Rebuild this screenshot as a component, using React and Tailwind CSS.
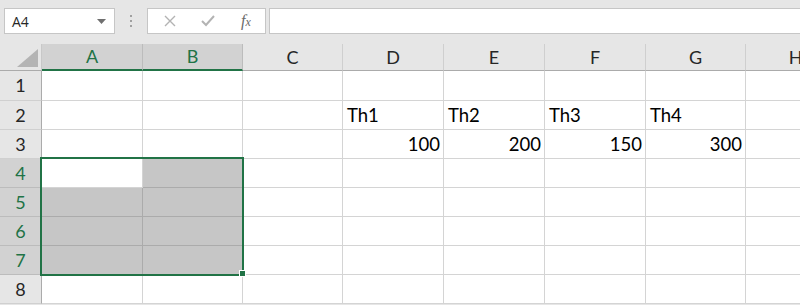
import React from "react";

const cols = [
  { name: "A", w: 101 },
  { name: "B", w: 100 },
  { name: "C", w: 100 },
  { name: "D", w: 101 },
  { name: "E", w: 101 },
  { name: "F", w: 101 },
  { name: "G", w: 100 },
  { name: "H", w: 100 },
];

const data = {
  2: { D: "Th1", E: "Th2", F: "Th3", G: "Th4" },
  3: { D: "100", E: "200", F: "150", G: "300" },
};

const selCols = ["A", "B"];
const selRows = [4, 5, 6, 7];

function isFilled(row, col) {
  if (!selRows.includes(row) || !selCols.includes(col)) return false;
  return !(row === 4 && col === "A");
}

function Toolbar() {
  return (
    <div className="h-[44px] flex items-start pt-[8px] pl-[4px] gap-0">
      <div className="w-[111px] h-[26px] bg-white border border-[#c6c6c6] flex items-center justify-between pl-[7px] pr-[8px] text-[14px] text-[#262626] font-['Open_Sans',sans-serif]">
        <span>A4</span>
        <svg width="9" height="5" viewBox="0 0 9 5">
          <polygon points="0,0 9,0 4.5,5" fill="#6f6f6f" />
        </svg>
      </div>
      <div className="w-[32px] h-[26px] flex flex-col items-center justify-center gap-[3px]">
        <span className="w-[2px] h-[2px] bg-[#a0a0a0]" />
        <span className="w-[2px] h-[2px] bg-[#a0a0a0]" />
        <span className="w-[2px] h-[2px] bg-[#a0a0a0]" />
      </div>
      <div className="w-[119px] h-[26px] bg-white border border-[#c6c6c6] flex items-center">
        <div className="w-[41px] flex justify-center pl-[2px]">
          <svg width="12" height="12" viewBox="0 0 12 12">
            <path d="M1 1 L11 11 M11 1 L1 11" stroke="#b3b3b3" strokeWidth="1.4" fill="none" />
          </svg>
        </div>
        <div className="w-[38px] flex justify-center">
          <svg width="14" height="12" viewBox="0 0 14 12">
            <path d="M1 6 L5 10 L13 1" stroke="#b3b3b3" strokeWidth="2" fill="none" />
          </svg>
        </div>
        <div className="w-[38px] flex justify-center text-[#6a6a6a] italic text-[16px] leading-none font-['Liberation_Serif',serif]">
          <span>f<span className="text-[12px]">x</span></span>
        </div>
      </div>
      <div className="flex-1 ml-[3px] h-[26px] bg-white border border-[#c6c6c6] border-r-0" />
    </div>
  );
}

function HeaderRow() {
  return (
    <div className="flex h-[27px]">
      <div className="w-[42px] shrink-0 border-r border-[#c8c8c8] border-b border-b-[#ababab] bg-[#e6e6e6] relative">
        <svg className="absolute left-[17px] top-[5px]" width="22" height="18" viewBox="0 0 22 18">
          <polygon points="21,0 21,18 0,18" fill="#b4b4b4" />
        </svg>
      </div>
      {cols.map((c) => {
        const sel = selCols.includes(c.name);
        return (
          <div
            key={c.name}
            style={{ width: c.w }}
            className={
              "shrink-0 flex items-center justify-center text-[18px] border-r " +
              (sel
                ? "bg-[#d2d2d2] text-[#217346] border-[#bcbcbc] border-b-2 border-b-[#217346]"
                : "bg-[#e6e6e6] text-[#262626] border-[#cfcfcf] border-b border-b-[#ababab]")
            }
          >
            {c.name}
          </div>
        );
      })}
    </div>
  );
}

function Row({ n }) {
  const selRow = selRows.includes(n);
  return (
    <div className={"flex " + (n === 1 ? "h-[30px]" : "h-[29px]")}>
      <div
        className={
          "w-[42px] shrink-0 flex items-center justify-center text-[18px] border-r border-b " +
          (selRow
            ? "bg-[#d2d2d2] text-[#217346] border-r-[#ababab] border-b-[#bcbcbc]"
            : "bg-[#e6e6e6] text-[#262626] border-r-[#ababab] border-b-[#d0d0d0]")
        }
      >
        {n}
      </div>
      {cols.map((c) => {
        const v = data[n] && data[n][c.name];
        const filled = isFilled(n, c.name);
        const num = v && /^\d+$/.test(v);
        return (
          <div
            key={c.name}
            style={{ width: c.w }}
            className={
              "shrink-0 flex items-end pb-[2px] pl-[4px] pr-[3px] text-[18.5px] leading-[24px] text-black border-r border-b " +
              (num ? "justify-end " : "justify-start ") +
              (filled ? "bg-[#c6c6c6] border-[#ababab]" : "bg-white border-[#d4d4d4]")
            }
          >
            {v}
          </div>
        );
      })}
    </div>
  );
}

export default function App() {
  return (
    <div className="w-[800px] h-[305px] overflow-hidden bg-[#e6e6e6] font-['Lato',sans-serif] relative">
      <Toolbar />
      <HeaderRow />
      {[1, 2, 3, 4, 5, 6, 7, 8].map((n) => (
        <Row key={n} n={n} />
      ))}
      <div className="absolute left-[40px] top-[157px] w-[204px] h-[119px] border-2 border-[#217346] pointer-events-none" />
      <div className="absolute left-[239px] top-[270px] w-[7px] h-[7px] bg-[#217346] border border-white" />
    </div>
  );
}
